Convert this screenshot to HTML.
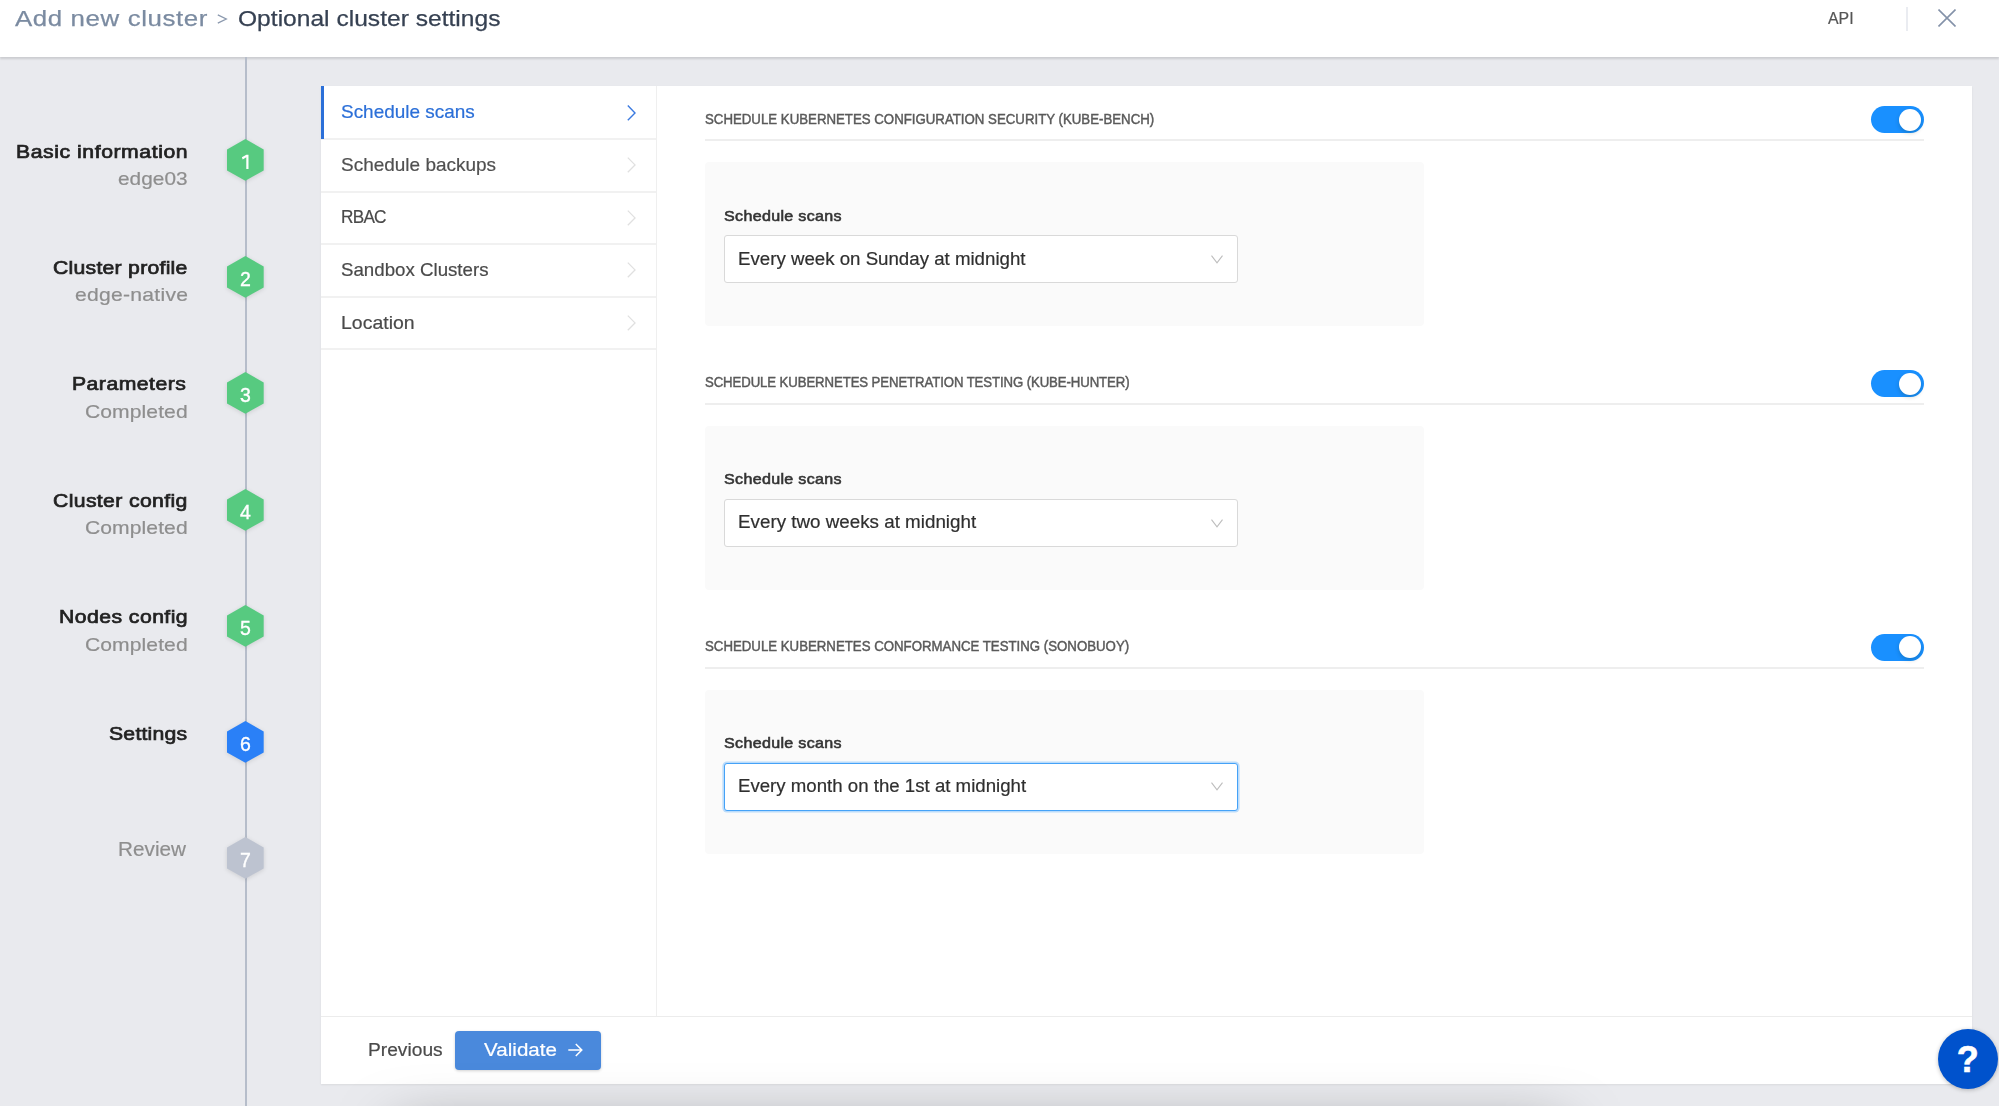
<!DOCTYPE html>
<html><head><meta charset="utf-8">
<style>
*{box-sizing:border-box;margin:0;padding:0}
html,body{width:1999px;height:1106px;overflow:hidden}
body{background:#e9eaee;font-family:"Liberation Sans",sans-serif;position:relative}
.abs{position:absolute}
.tx{position:absolute;white-space:nowrap;line-height:1;transform-origin:0 0;display:inline-block}
#hdr{left:0;top:0;width:1999px;height:57px;background:#fff;box-shadow:0 1.5px 2px rgba(0,0,0,.13)}
.vsep{left:1905.5px;top:7.2px;width:2.3px;height:23.4px;background:#eaecf1}
#vline{left:245px;top:57px;width:2px;height:1049px;background:#b6bdca}
.hex{width:36.7px;height:41.8px;left:226.9px;overflow:visible;filter:drop-shadow(0 1px 2px rgba(0,0,0,.12))}
.hex text{font-family:"Liberation Sans",sans-serif;font-size:19.5px;fill:#fff;stroke:#fff;stroke-width:.35px}
#card{left:321px;top:86px;width:1651px;height:998px;background:#fff;box-shadow:0 1px 2px rgba(0,0,0,.07)}
#mborder{left:656px;top:86px;width:1.2px;height:930px;background:#efefef}
#mact{left:321px;top:86px;width:3px;height:53px;background:#2b6fd8}
.mi{left:321px;width:335px;height:2px;background:#f1f1f1}
.hl{left:705px;width:1218.5px;height:2px;background:#eeeeee}
.box{left:705px;width:719.3px;height:164px;background:#fafafa;border-radius:4px}
.sel{left:724px;width:514px;height:48px;background:#fff;border:1px solid #d9d9d9;border-radius:3px}
.sel.focus{border-color:#45a2f7;box-shadow:0 0 0 1.6px rgba(24,144,255,.28)}
.sel svg{position:absolute;right:14.2px;top:18.8px}
.tg{left:1870.5px;width:53.5px;height:26.7px;border-radius:13.4px;background:#1990ff}
.tg i{position:absolute;right:2.7px;top:2.6px;width:22px;height:22px;border-radius:11px;background:#fff;box-shadow:0 2px 4px rgba(0,35,11,.2)}
#foot{left:321px;top:1016px;width:1651px;height:1px;background:#ececec}
.btn{left:455px;top:1031.3px;width:146px;height:38.5px;background:#4a89dc;border-radius:4px;box-shadow:0 1px 3px rgba(0,0,0,.18)}
.help{left:1937.7px;top:1028.9px;width:60px;height:60px;border-radius:30px;background:#0052cc;color:#fff;font-weight:bold;font-size:36px;line-height:61px;text-align:center;-webkit-text-stroke:.6px #fff;box-shadow:0 1px 4px rgba(0,0,0,.25)}
#shadow{left:400px;top:1135px;width:1160px;height:100px;box-shadow:0 0 60px rgba(0,0,0,.5)}
</style></head><body>
<div id="hdr" class="abs"></div>
<div class="abs vsep"></div>
<svg class="abs" style="left:217.4px;top:14px" width="11" height="10" viewBox="0 0 11 10"><path d="M0.8 0.9L9.3 5L0.8 9.1" stroke="#8b99ae" stroke-width="1.3" fill="none"/></svg>
<svg class="abs" style="left:1938.3px;top:8.9px" width="18" height="18" viewBox="0 0 18 18"><path d="M0.5 0.5L17.5 17.5M17.5 0.5L0.5 17.5" stroke="#8492a9" stroke-width="1.6" fill="none"/></svg>
<div id="vline" class="abs"></div>
<svg class="abs hex" style="top:139.0px" viewBox="0 0 36.7 41.8"><path d="M18.35 0L36.7 10.4V31.4L18.35 41.8L0 31.4V10.4Z" fill="#57ca80"/><path d="M14.9 18.3L19.4 15.7H21.5V29.9H19.3V18.3L15.7 20.4Z" fill="#fff"/></svg>
<svg class="abs hex" style="top:255.8px" viewBox="0 0 36.7 41.8"><path d="M18.35 0L36.7 10.4V31.4L18.35 41.8L0 31.4V10.4Z" fill="#57ca80"/><text x="18.35" y="29.9" text-anchor="middle">2</text></svg>
<svg class="abs hex" style="top:372.1px" viewBox="0 0 36.7 41.8"><path d="M18.35 0L36.7 10.4V31.4L18.35 41.8L0 31.4V10.4Z" fill="#57ca80"/><text x="18.35" y="29.9" text-anchor="middle">3</text></svg>
<svg class="abs hex" style="top:488.5px" viewBox="0 0 36.7 41.8"><path d="M18.35 0L36.7 10.4V31.4L18.35 41.8L0 31.4V10.4Z" fill="#57ca80"/><text x="18.35" y="29.9" text-anchor="middle">4</text></svg>
<svg class="abs hex" style="top:604.8px" viewBox="0 0 36.7 41.8"><path d="M18.35 0L36.7 10.4V31.4L18.35 41.8L0 31.4V10.4Z" fill="#57ca80"/><text x="18.35" y="29.9" text-anchor="middle">5</text></svg>
<svg class="abs hex" style="top:720.9px" viewBox="0 0 36.7 41.8"><path d="M18.35 0L36.7 10.4V31.4L18.35 41.8L0 31.4V10.4Z" fill="#2a80f7"/><text x="18.35" y="29.9" text-anchor="middle">6</text></svg>
<svg class="abs hex" style="top:837.4px" viewBox="0 0 36.7 41.8"><path d="M18.35 0L36.7 10.4V31.4L18.35 41.8L0 31.4V10.4Z" fill="#bdc3d0"/><text x="18.35" y="29.9" text-anchor="middle">7</text></svg>
<div id="card" class="abs"></div>
<div id="mborder" class="abs"></div>
<div class="abs mi" style="top:137.9px"></div><div class="abs" style="left:627px;top:104.6px;width:9px;height:16px"><svg width="9" height="16" viewBox="0 0 9 16"><path d="M0.8 0.6L8 7.9L0.8 15.2" stroke="#3b7ae0" stroke-width="1.4" fill="none"/></svg></div>
<div class="abs mi" style="top:190.5px"></div><div class="abs" style="left:627px;top:157.2px;width:9px;height:16px"><svg width="9" height="16" viewBox="0 0 9 16"><path d="M0.8 0.6L8 7.9L0.8 15.2" stroke="#e0e0e0" stroke-width="1.3" fill="none"/></svg></div>
<div class="abs mi" style="top:243.1px"></div><div class="abs" style="left:627px;top:209.8px;width:9px;height:16px"><svg width="9" height="16" viewBox="0 0 9 16"><path d="M0.8 0.6L8 7.9L0.8 15.2" stroke="#e0e0e0" stroke-width="1.3" fill="none"/></svg></div>
<div class="abs mi" style="top:295.7px"></div><div class="abs" style="left:627px;top:262.4px;width:9px;height:16px"><svg width="9" height="16" viewBox="0 0 9 16"><path d="M0.8 0.6L8 7.9L0.8 15.2" stroke="#e0e0e0" stroke-width="1.3" fill="none"/></svg></div>
<div class="abs mi" style="top:348.3px"></div><div class="abs" style="left:627px;top:315.0px;width:9px;height:16px"><svg width="9" height="16" viewBox="0 0 9 16"><path d="M0.8 0.6L8 7.9L0.8 15.2" stroke="#e0e0e0" stroke-width="1.3" fill="none"/></svg></div>
<div id="mact" class="abs"></div>
<div class="abs tg" style="top:106.3px"><i></i></div>
<div class="abs hl" style="top:139.0px"></div>
<div class="abs box" style="top:161.9px"></div>
<div class="abs sel" style="top:235.0px"><svg width="12" height="9" viewBox="0 0 12 9"><path d="M0.5 0.7L6 7.8L11.5 0.7" stroke="#bdbdbd" stroke-width="1.1" fill="none"/></svg></div>
<div class="abs tg" style="top:370.1px"><i></i></div>
<div class="abs hl" style="top:402.8px"></div>
<div class="abs box" style="top:425.7px"></div>
<div class="abs sel" style="top:498.8px"><svg width="12" height="9" viewBox="0 0 12 9"><path d="M0.5 0.7L6 7.8L11.5 0.7" stroke="#bdbdbd" stroke-width="1.1" fill="none"/></svg></div>
<div class="abs tg" style="top:633.9px"><i></i></div>
<div class="abs hl" style="top:666.6px"></div>
<div class="abs box" style="top:689.5px"></div>
<div class="abs sel focus" style="top:762.6px"><svg width="12" height="9" viewBox="0 0 12 9"><path d="M0.5 0.7L6 7.8L11.5 0.7" stroke="#bdbdbd" stroke-width="1.1" fill="none"/></svg></div>
<div id="foot" class="abs"></div>
<div class="abs btn"></div>
<svg class="abs" style="left:568px;top:1043px" width="15" height="14" viewBox="0 0 15 14"><path d="M0.3 7H13.6M7.8 1L13.8 7L7.8 13" stroke="#fff" stroke-width="1.5" fill="none"/></svg>
<div id="shadow" class="abs"></div>
<div class="abs help">?</div>
<span class="tx" style="left:14.55px;top:7.48px;font-size:22.7px;font-weight:normal;color:#7b8ba1;letter-spacing:0.528px;transform:scaleX(1.1400);-webkit-text-stroke:.25px #7b8ba1;">Add new cluster</span>
<span class="tx" style="left:238.18px;top:7.28px;font-size:22.7px;font-weight:normal;color:#364152;letter-spacing:0.009px;transform:scaleX(1.0829);-webkit-text-stroke:.25px #364152;">Optional cluster settings</span>
<span class="tx" style="left:1827.69px;top:11.19px;font-size:15.6px;font-weight:normal;color:#555;letter-spacing:0.019px;transform:scaleX(1.0194);-webkit-text-stroke:.2px #555;">API</span>
<span class="tx" style="left:15.92px;top:142.76px;font-size:18.6px;font-weight:normal;color:#222;letter-spacing:0.491px;transform:scaleX(1.1400);-webkit-text-stroke:.7px #222;">Basic information</span>
<span class="tx" style="left:117.85px;top:169.84px;font-size:18.5px;font-weight:normal;color:#8e8e8e;letter-spacing:0.053px;transform:scaleX(1.1226);-webkit-text-stroke:.2px #8e8e8e;">edge03</span>
<span class="tx" style="left:52.70px;top:258.66px;font-size:18.6px;font-weight:normal;color:#222;letter-spacing:0.225px;transform:scaleX(1.1400);-webkit-text-stroke:.7px #222;">Cluster profile</span>
<span class="tx" style="left:74.52px;top:285.74px;font-size:18.5px;font-weight:normal;color:#8e8e8e;letter-spacing:0.238px;transform:scaleX(1.1400);-webkit-text-stroke:.2px #8e8e8e;">edge-native</span>
<span class="tx" style="left:72.22px;top:375.06px;font-size:18.6px;font-weight:normal;color:#222;letter-spacing:0.414px;transform:scaleX(1.1400);-webkit-text-stroke:.7px #222;">Parameters</span>
<span class="tx" style="left:84.82px;top:402.64px;font-size:18.5px;font-weight:normal;color:#8e8e8e;letter-spacing:0.071px;transform:scaleX(1.1400);-webkit-text-stroke:.2px #8e8e8e;">Completed</span>
<span class="tx" style="left:52.70px;top:491.96px;font-size:18.6px;font-weight:normal;color:#222;letter-spacing:0.317px;transform:scaleX(1.1400);-webkit-text-stroke:.7px #222;">Cluster config</span>
<span class="tx" style="left:84.82px;top:518.54px;font-size:18.5px;font-weight:normal;color:#8e8e8e;letter-spacing:0.071px;transform:scaleX(1.1400);-webkit-text-stroke:.2px #8e8e8e;">Completed</span>
<span class="tx" style="left:58.82px;top:608.36px;font-size:18.6px;font-weight:normal;color:#222;letter-spacing:0.393px;transform:scaleX(1.1400);-webkit-text-stroke:.7px #222;">Nodes config</span>
<span class="tx" style="left:84.82px;top:635.94px;font-size:18.5px;font-weight:normal;color:#8e8e8e;letter-spacing:0.071px;transform:scaleX(1.1400);-webkit-text-stroke:.2px #8e8e8e;">Completed</span>
<span class="tx" style="left:108.64px;top:724.76px;font-size:18.6px;font-weight:normal;color:#222;letter-spacing:0.201px;transform:scaleX(1.1400);-webkit-text-stroke:.7px #222;">Settings</span>
<span class="tx" style="left:118.05px;top:840.06px;font-size:19.3px;font-weight:normal;color:#8e8e8e;letter-spacing:0.034px;transform:scaleX(1.0730);-webkit-text-stroke:.2px #8e8e8e;">Review</span>
<span class="tx" style="left:340.57px;top:103.43px;font-size:18.5px;font-weight:normal;color:#2b6fd8;letter-spacing:0.004px;transform:scaleX(1.0243);-webkit-text-stroke:.2px #2b6fd8;">Schedule scans</span>
<span class="tx" style="left:340.57px;top:155.64px;font-size:18.5px;font-weight:normal;color:#505050;letter-spacing:0.004px;transform:scaleX(1.0251);-webkit-text-stroke:.2px #505050;">Schedule backups</span>
<span class="tx" style="left:340.70px;top:207.74px;font-size:18.5px;font-weight:normal;color:#4a4a4a;letter-spacing:-0.814px;transform:scaleX(0.9300);-webkit-text-stroke:.2px #4a4a4a;">RBAC</span>
<span class="tx" style="left:340.59px;top:260.84px;font-size:18.5px;font-weight:normal;color:#4a4a4a;letter-spacing:0.002px;transform:scaleX(1.0101);-webkit-text-stroke:.2px #4a4a4a;">Sandbox Clusters</span>
<span class="tx" style="left:340.54px;top:313.54px;font-size:18.5px;font-weight:normal;color:#4a4a4a;letter-spacing:0.017px;transform:scaleX(1.0508);-webkit-text-stroke:.2px #4a4a4a;">Location</span>
<span class="tx" style="left:704.57px;top:112.48px;font-size:14.2px;font-weight:normal;color:#5a5a5a;letter-spacing:-0.002px;transform:scaleX(0.9338);-webkit-text-stroke:.45px #5a5a5a;">SCHEDULE KUBERNETES CONFIGURATION SECURITY (KUBE-BENCH)</span>
<span class="tx" style="left:704.58px;top:375.28px;font-size:14.2px;font-weight:normal;color:#5a5a5a;letter-spacing:-0.110px;transform:scaleX(0.9300);-webkit-text-stroke:.45px #5a5a5a;">SCHEDULE KUBERNETES PENETRATION TESTING (KUBE-HUNTER)</span>
<span class="tx" style="left:704.57px;top:639.08px;font-size:14.2px;font-weight:normal;color:#5a5a5a;letter-spacing:-0.003px;transform:scaleX(0.9333);-webkit-text-stroke:.45px #5a5a5a;">SCHEDULE KUBERNETES CONFORMANCE TESTING (SONOBUOY)</span>
<span class="tx" style="left:723.67px;top:208.98px;font-size:14.1px;font-weight:normal;color:#333;letter-spacing:0.279px;transform:scaleX(1.1400);-webkit-text-stroke:.55px #333;">Schedule scans</span>
<span class="tx" style="left:723.67px;top:472.36px;font-size:14.1px;font-weight:normal;color:#333;letter-spacing:0.279px;transform:scaleX(1.1400);-webkit-text-stroke:.55px #333;">Schedule scans</span>
<span class="tx" style="left:723.67px;top:736.16px;font-size:14.1px;font-weight:normal;color:#333;letter-spacing:0.279px;transform:scaleX(1.1400);-webkit-text-stroke:.55px #333;">Schedule scans</span>
<span class="tx" style="left:737.79px;top:249.71px;font-size:18.3px;font-weight:normal;color:#2f2f2f;letter-spacing:0.002px;transform:scaleX(1.0211);-webkit-text-stroke:.2px #2f2f2f;">Every week on Sunday at midnight</span>
<span class="tx" style="left:737.78px;top:513.01px;font-size:18.3px;font-weight:normal;color:#2f2f2f;letter-spacing:0.002px;transform:scaleX(1.0277);-webkit-text-stroke:.2px #2f2f2f;">Every two weeks at midnight</span>
<span class="tx" style="left:737.79px;top:776.81px;font-size:18.3px;font-weight:normal;color:#2f2f2f;letter-spacing:0.001px;transform:scaleX(1.0197);-webkit-text-stroke:.2px #2f2f2f;">Every month on the 1st at midnight</span>
<span class="tx" style="left:368.26px;top:1040.51px;font-size:18.3px;font-weight:normal;color:#4a4a4a;letter-spacing:0.016px;transform:scaleX(1.0483);-webkit-text-stroke:.2px #4a4a4a;">Previous</span>
<span class="tx" style="left:483.84px;top:1040.51px;font-size:18.3px;font-weight:normal;color:#fff;letter-spacing:0.037px;transform:scaleX(1.1236);-webkit-text-stroke:.2px #fff;">Validate</span>
</body></html>
